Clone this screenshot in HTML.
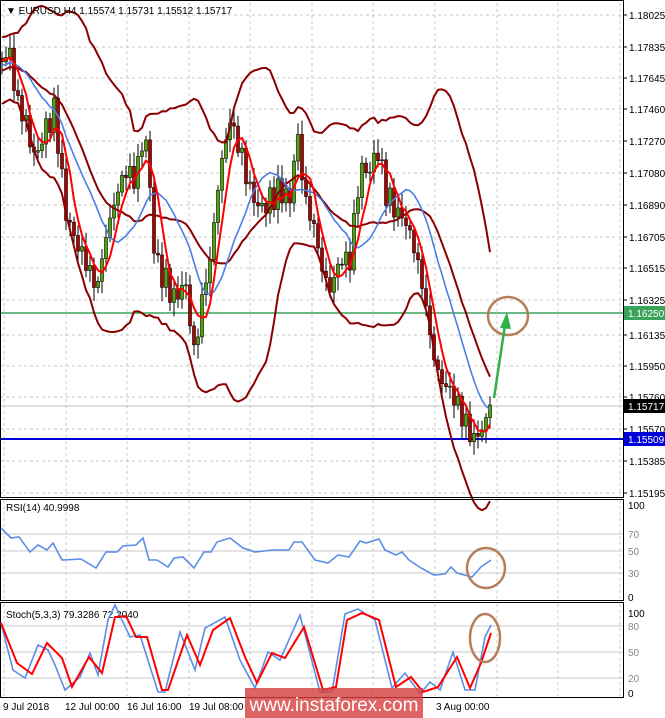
<!DOCTYPE html>
<html><head><meta charset="utf-8"><style>
html,body{margin:0;padding:0;background:#fff;width:665px;height:718px;overflow:hidden}
svg{display:block;font-family:"Liberation Sans",sans-serif}
</style></head><body>
<svg id="s" width="665" height="718" xmlns="http://www.w3.org/2000/svg">
<rect width="665" height="718" fill="#fff"/>
<g id="grid" stroke="#c8c8c8" stroke-dasharray="3,3" stroke-width="1"></g>
<g id="main"></g>
<g id="axis" font-size="10" fill="#000"></g>
</svg>
<script>
const NS="http://www.w3.org/2000/svg";
function el(tag,attrs,parent,text){const e=document.createElementNS(NS,tag);for(const k in attrs)e.setAttribute(k,attrs[k]);if(text!==undefined)e.textContent=text;(parent||document.getElementById('s')).appendChild(e);return e;}
const S=document.getElementById('s'),G=document.getElementById('grid'),M=document.getElementById('main'),A=document.getElementById('axis');
// verticals
const vx=[4,66,127,189,250,312,373,435,497,558,620];
const prices=[["1.18025",15],["1.17835",47],["1.17645",78],["1.17460",109],["1.17270",141],["1.17080",173],["1.16890",205],["1.16705",237],["1.16515",268],["1.16325",300],["1.16135",335],["1.15950",366],["1.15760",397],["1.15570",429],["1.15385",461],["1.15195",493]];
vx.forEach(x=>{el('line',{x1:x,y1:3,x2:x,y2:496},G);el('line',{x1:x,y1:500,x2:x,y2:599},G);el('line',{x1:x,y1:604,x2:x,y2:696},G);});
prices.forEach(p=>{el('line',{x1:0,y1:p[1],x2:623,y2:p[1]},G);});
[534,551,573].forEach(y=>el('line',{x1:0,y1:y,x2:623,y2:y,stroke:'#c8c8c8','stroke-dasharray':'none'},S));
[626,652,678].forEach(y=>el('line',{x1:0,y1:y,x2:623,y2:y,stroke:'#c8c8c8','stroke-dasharray':'none'},S));
// keypoints of close (pixel y)
const kp=[[-80,90],[-40,70],[-10,60],[5,60],[10,50],[15,95],[25,120],[35,160],[45,130],[55,110],[65,210],[75,240],[85,260],[97,290],[105,240],[115,200],[125,170],[135,180],[145,130],[150,190],[155,260],[165,280],[175,300],[185,280],[195,360],[200,310],[210,260],[220,170],[230,120],[240,150],[250,190],[260,210],[270,200],[280,190],[290,200],[297,130],[305,200],[315,230],[322,270],[330,290],[340,260],[350,260],[360,170],[370,170],[378,150],[385,190],[395,210],[405,220],[415,250],[425,300],[432,350],[440,380],[450,390],[460,410],[468,430],[475,440],[482,430],[490,405]];
function interp(x){for(let i=0;i<kp.length-1;i++){if(x>=kp[i][0]&&x<=kp[i+1][0]){const t=(x-kp[i][0])/(kp[i+1][0]-kp[i][0]);return kp[i][1]+t*(kp[i+1][1]-kp[i][1]);}}return kp[kp.length-1][1];}
const xs=[],cl=[];
for(let x=-78;x<=490;x+=4){xs.push(x);const n=Math.sin(x*0.9)*8+Math.sin(x*2.3)*6;cl.push(interp(x)+(x>480?0:n));}
cl[cl.length-1]=405;
function sma(a,n){return a.map((v,i)=>{const s=a.slice(Math.max(0,i-n+1),i+1);return s.reduce((p,c)=>p+c,0)/s.length;});}
const red=sma(cl,5),blue=sma(cl,14),mid=sma(cl,20);
const up=[],lo=[];
cl.forEach((v,i)=>{const s=cl.slice(Math.max(0,i-19),i+1);const m=mid[i];const sd=Math.sqrt(s.reduce((p,c)=>p+(c-m)*(c-m),0)/s.length);up.push(m-2*sd-10);lo.push(m+2*sd+10);});
function poly(arr,col,w){let d='';xs.forEach((x,i)=>{if(x>=0)d+=x+','+arr[i].toFixed(1)+' ';});el('polyline',{points:d,fill:'none',stroke:col,'stroke-width':w,'stroke-linejoin':'round'},M);}
// price lines
el('line',{x1:0,y1:406,x2:623,y2:406,stroke:'#c0c0c0'},M);
el('line',{x1:0,y1:313,x2:623,y2:313,stroke:'#3aa35a','stroke-width':1.5},M);
el('line',{x1:0,y1:439,x2:623,y2:439,stroke:'#0000d8','stroke-width':2},M);
// candles
for(let i=1;i<xs.length;i++){const x=xs[i];if(x<0)continue;const o=cl[i-1],c=cl[i];const h=Math.min(o,c)-4-Math.abs(Math.sin(x*1.7))*10,l=Math.max(o,c)+4+Math.abs(Math.cos(x*1.3))*10;
el('line',{x1:x,y1:h,x2:x,y2:l,stroke:'#000'},M);
const bull=c<o;el('rect',{x:x-1.5,y:Math.min(o,c),width:3,height:Math.max(1,Math.abs(o-c)),fill:bull?'#4ea600':'#b00000',stroke:'#000','stroke-width':0.6},M);}
poly(up,'#8b0000',2);poly(lo,'#8b0000',2);poly(mid,'#8b0000',2);poly(blue,'#4a7ee8',1.6);poly(red,'#ff0000',2);
// circle & arrow
el('ellipse',{cx:508,cy:316,rx:20,ry:19,fill:'none',stroke:'#b57f59','stroke-width':2.5},M);
el('line',{x1:494,y1:398,x2:505,y2:325,stroke:'#2db24a','stroke-width':2.5},M);
el('polygon',{points:'507,312 500,328 511,329',fill:'#2db24a'},M);
// panel borders
el('rect',{x:0.5,y:0.5,width:623,height:497,fill:'none',stroke:'#000'},S);
el('rect',{x:0.5,y:499.5,width:623,height:101,fill:'none',stroke:'#000'},S);
el('rect',{x:0.5,y:602.5,width:623,height:95,fill:'none',stroke:'#000'},S);
// axis labels
prices.forEach(p=>{el('line',{x1:623,y1:p[1],x2:627,y2:p[1],stroke:'#000'},A);el('text',{x:629,y:p[1]+4},A,p[0]);});
el('rect',{x:624,y:306,width:41,height:14,fill:'#3aa35a'},A);el('text',{x:628,y:317,fill:'#fff'},A,'1.16250');
el('rect',{x:624,y:399,width:41,height:14,fill:'#000'},A);el('text',{x:628,y:410,fill:'#fff'},A,'1.15717');
el('rect',{x:624,y:432,width:41,height:14,fill:'#0000d8'},A);el('text',{x:628,y:443,fill:'#fff'},A,'1.15509');
[["100",505],["70",534],["50",551],["30",573],["0",597]].forEach(p=>el('text',{x:628,y:p[1]+4,fill:(p[0]=='100'||p[0]=='0')?'#000':'#888'},A,p[0]));
[["100",613],["80",626],["50",652],["20",678],["0",693]].forEach(p=>el('text',{x:628,y:p[1]+4,fill:(p[0]=='100'||p[0]=='0')?'#000':'#888'},A,p[0]));
el('text',{x:6,y:14},A,'▼ EURUSD,H4  1.15574 1.15731 1.15512 1.15717');
el('text',{x:6,y:511},A,'RSI(14) 40.9998');
el('text',{x:6,y:618},A,'Stoch(5,3,3) 79.3286 72.2040');
[["9 Jul 2018",3],["12 Jul 00:00",65],["16 Jul 16:00",127],["19 Jul 08:00",189],["3 Aug 00:00",436]].forEach(p=>el('text',{x:p[1],y:710},A,p[0]));
// RSI
const rsi=[[1,528],[11,538],[19,537],[30,552],[38,545],[47,550],[53,543],[62,560],[81,559],[96,568],[106,552],[117,552],[123,546],[136,545],[143,538],[149,560],[157,560],[168,567],[174,558],[183,557],[194,568],[204,552],[211,552],[217,542],[230,538],[243,548],[255,552],[272,550],[289,550],[294,542],[302,542],[315,560],[328,563],[338,555],[349,557],[360,541],[366,543],[379,539],[385,550],[396,555],[402,552],[409,560],[421,568],[434,575],[445,574],[451,567],[457,573],[472,577],[481,567],[491,560]];
el('polyline',{points:rsi.map(p=>p.join(',')).join(' '),fill:'none',stroke:'#5b8ee6','stroke-width':1.6},S);
el('ellipse',{cx:486,cy:568,rx:19,ry:20,fill:'none',stroke:'#b57f59','stroke-width':2.5},S);
const sb=[[1,623],[13,670],[25,678],[38,645],[48,650],[55,665],[65,690],[80,677],[90,653],[98,675],[108,620],[115,605],[130,637],[140,635],[158,692],[165,692],[180,632],[195,670],[205,628],[225,617],[240,660],[255,688],[268,652],[280,660],[300,615],[320,692],[332,692],[345,614],[358,609],[375,620],[392,688],[405,673],[420,694],[430,682],[440,690],[453,652],[465,690],[475,690],[485,637],[491,625]];
const sr=[[1,623],[17,663],[32,674],[47,643],[62,658],[72,687],[89,657],[102,673],[115,617],[126,616],[136,637],[147,637],[162,690],[168,690],[187,635],[200,665],[213,630],[230,618],[245,657],[257,683],[272,653],[285,658],[304,627],[323,690],[336,687],[347,620],[362,613],[379,620],[396,687],[411,677],[423,692],[438,687],[457,657],[470,688],[481,663],[491,633]];
el('polyline',{points:sb.map(p=>p.join(',')).join(' '),fill:'none',stroke:'#5b8ee6','stroke-width':1.6},S);
el('polyline',{points:sr.map(p=>p.join(',')).join(' '),fill:'none',stroke:'#ff0000','stroke-width':2},S);
el('ellipse',{cx:485,cy:638,rx:15,ry:24,fill:'none',stroke:'#b57f59','stroke-width':2.5},S);
// watermark
el('rect',{x:245,y:688,width:178,height:30,fill:'rgba(214,60,60,0.8)'},S);
el('text',{x:334,y:711,'font-size':19,fill:'#fff','text-anchor':'middle'},S,'www.instaforex.com');
</script>
</body></html>
